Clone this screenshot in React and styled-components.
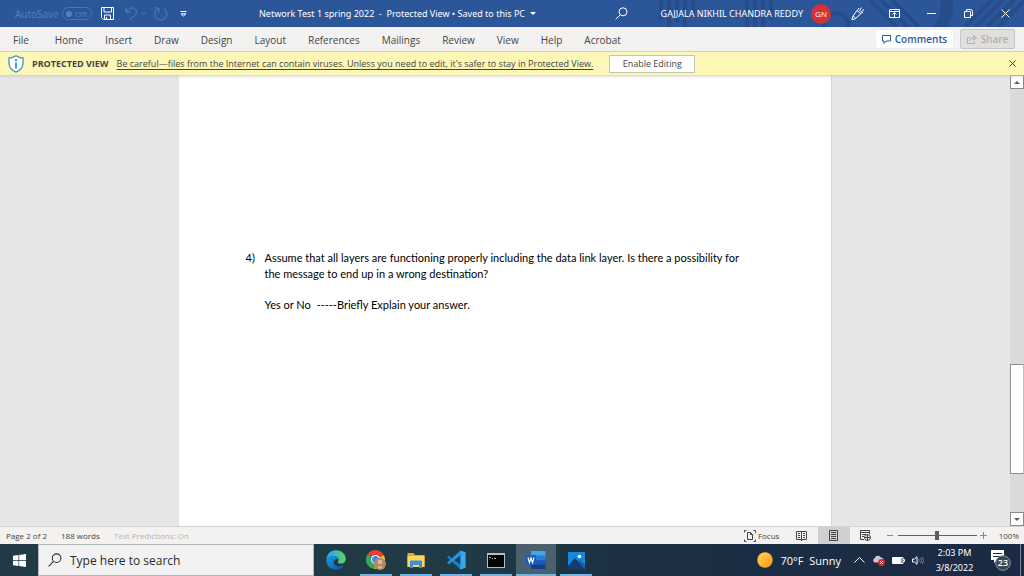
import styled, { createGlobalStyle } from 'styled-components'

const GlobalStyle = createGlobalStyle`
    *{
        box-sizing: border-box;
    }
    body{
        margin: 0;
        font-family: "Open Sans", "Noto Sans", sans-serif;
        font-size: 10px;
        color: #444444;
    }
    button, input{
        font: inherit;
        color: inherit;
        margin: 0;
        padding: 0;
        border: 0;
        background: none;
    }
    svg{
        display: block;
        flex: none;
    }
`
const Screen = styled.div`
    display: flex;
    flex-direction: column;
    height: 100vh;
    overflow: hidden;
`

/* title bar */
const TitleBar = styled.header`
    position: relative;
    z-index: 0;
    display: grid;
    grid-template-columns: 259fr 354fr 411fr;
    align-items: center;
    flex: none;
    height: 27px;
    background: #2b579a;
    color: #ffffff;
    white-space: nowrap;
`
const Pattern = styled.svg`
    position: absolute;
    top: 0;
    right: 0;
    z-index: -1;
`
const Group = styled.div`
    display: flex;
    align-items: center;
    padding-left: ${props => props.$indent || "0"};
`
const QuickAccess = styled(Group)`
    color: #5580bd;
`
const Toggle = styled.button`
    display: flex;
    align-items: center;
    justify-content: space-between;
    width: 30px;
    height: 13px;
    margin-left: 3px;
    padding: 0 4px 0 3px;
    border: 1px solid #4a76b5;
    border-radius: 7px;
    font-size: 8px;
    line-height: 10px;
`
const Knob = styled.span`
    width: 6px;
    height: 6px;
    border-radius: 50%;
    background: #5580bd;
`
const IconButton = styled.button`
    display: flex;
    align-items: center;
    justify-content: center;
    width: ${props => props.$width || "16px"};
    height: 18px;
    color: ${props => props.$color || "inherit"};
`
const DocumentName = styled.h1`
    margin: 0;
    font-family: "Noto Sans", "Open Sans", sans-serif;
    font-size: 9px;
    font-weight: normal;
    display: flex;
    align-items: center;
    gap: 5px;
`
const Account = styled.div`
    display: grid;
    grid-template-columns: 14px 1fr auto auto;
    align-items: center;
`
const UserName = styled.span`
    padding-right: 8px;
    font-family: "Noto Sans", "Open Sans", sans-serif;
    font-size: 9px;
    text-align: right;
`
const Avatar = styled.span`
    width: 20px;
    height: 20px;
    border-radius: 50%;
    background: #d13438;
    font-size: 8px;
    line-height: 20px;
    text-align: center;
`

/* ribbon */
const Ribbon = styled.nav`
    display: flex;
    align-items: center;
    flex: none;
    height: 25px;
    padding: 0 9px 0 2px;
    background: #f3f2f1;
    border-bottom: 1px solid #d2d0ce;
`
const Tab = styled.button`
    padding: 2px 11px 0;
    line-height: 22px;
    &:first-child{
        margin-right: 4px;
    }
`
const RibbonButton = styled.button`
    display: flex;
    align-items: center;
    justify-content: center;
    gap: 4px;
    width: ${props => props.$width};
    height: 20px;
    margin-left: ${props => props.disabled ? "6px" : "auto"};
    border: 1px solid ${props => props.disabled ? "#c8c6c4" : "#f0efee"};
    border-radius: 2px;
    background: ${props => props.disabled ? "#e1dfdd" : "#ffffff"};
    color: ${props => props.disabled ? "#b1afad" : "#2b579a"};
    font-weight: 600;
`

/* message bar */
const MessageBar = styled.div`
    position: relative;
    display: flex;
    align-items: center;
    flex: none;
    height: 23px;
    padding: 0 4px 0 8px;
    background: #fcf7b6;
    box-shadow: 0 1px 3px #c8c8c8;
    font-size: 9px;
    white-space: nowrap;
`
const MessageTitle = styled.strong`
    margin: 0 8px;
    font-weight: 700;
`
const MessageLink = styled.a`
    color: inherit;
    text-decoration: underline;
    text-underline-offset: 2px;
`
const EnableButton = styled.button`
    width: 86px;
    height: 18px;
    margin: 0 auto 0 16px;
    border: 1px solid #c6c4b4;
    background: #ffffff;
`

/* document */
const Workspace = styled.main`
    display: flex;
    flex: 1;
    min-height: 0;
    background: #e6e6e6;
`
const Canvas = styled.div`
    display: flex;
    justify-content: center;
    flex: 1;
`
const Page = styled.article`
    width: 653px;
    max-width: 100%;
    padding: 175px 88px 0 67px;
    background: #ffffff;
    border-right: 1px solid #d4d4d4;
    color: #000000;
    font-family: Lato, "Open Sans", sans-serif;
    font-size: 11px;
    line-height: 16px;
`
const Question = styled.div`
    display: grid;
    grid-template-columns: 19px 1fr;
`
const Paragraph = styled.p`
    margin: 0 0 15px;
    white-space: pre-wrap;
`
const Scrollbar = styled.div`
    display: flex;
    flex-direction: column;
    flex: none;
    width: 14px;
    background: #dadada;
`
const ScrollButton = styled.button`
    display: flex;
    align-items: center;
    justify-content: center;
    height: 14px;
    border: 1px solid #8a8a8a;
    background: #ffffff;
    color: #606060;
`
const Track = styled.div`
    display: grid;
    grid-template-rows: 274fr 110fr 38fr;
    flex: 1;
`
const Thumb = styled.div`
    grid-row: 2;
    border: 1px solid #8f8f8f;
    border-right-color: #c0c0c0;
    background: #ffffff;
`

/* status bar */
const StatusBar = styled.footer`
    display: flex;
    align-items: center;
    flex: none;
    height: 18px;
    padding: 0 5px 0 6px;
    background: #f3f2f1;
    border-top: 1px solid #d6d4d2;
    font-size: 8px;
    white-space: nowrap;
`
const Status = styled.span`
    margin-right: 14px;
    color: ${props => props.$muted ? "#b4b2b0" : "inherit"};
`
const StatusTools = styled.div`
    display: flex;
    align-items: center;
    margin-left: auto;
`
const ViewButton = styled.button`
    display: flex;
    align-items: center;
    justify-content: center;
    gap: 2px;
    width: ${props => props.$width || "32px"};
    height: 17px;
    background: ${props => props.$active ? "#d2d0ce" : "none"};
`
const Zoom = styled.input`
    appearance: none;
    width: 79px;
    height: 12px;
    background: linear-gradient(#605e5c, #605e5c) center / 100% 1px no-repeat;
    &::-webkit-slider-thumb{
        appearance: none;
        width: 4px;
        height: 9px;
        background: #605e5c;
    }
`
const Percent = styled.span`
    margin-left: 8px;
`

/* taskbar */
const Taskbar = styled.footer`
    display: flex;
    align-items: stretch;
    flex: none;
    height: 32px;
    background: linear-gradient(90deg, #213a45, #203b45 45%, #1c2f42 62%, #1b2a44);
    color: #ffffff;
    white-space: nowrap;
`
const StartButton = styled.button`
    display: flex;
    align-items: center;
    justify-content: center;
    width: 38px;
`
const Search = styled.label`
    display: flex;
    align-items: center;
    gap: 8px;
    width: 276px;
    margin-right: 2px;
    padding-left: 9px;
    border: 1px solid #b5b8b9;
    background: #f2f2f2;
    color: #2b2b2b;
`
const SearchInput = styled.input`
    flex: 1;
    min-width: 0;
    outline: none;
    font-size: 12px;
    &::placeholder{
        color: #2b2b2b;
        opacity: 1;
    }
`
const AppButton = styled.button`
    display: flex;
    align-items: center;
    justify-content: center;
    width: ${props => props.$open && !props.$active ? "32px" : "40px"};
    margin: 0 ${props => props.$open && !props.$active ? "4px" : "0"};
    background: ${props => props.$active ? "#4a606c" : "none"};
    box-shadow: ${props => props.$open ? "inset 0 -2px #72b4e4" : "none"};
`
const Tray = styled.div`
    display: flex;
    align-items: center;
    margin-left: auto;
    padding-right: 3px;
`
const Weather = styled.button`
    display: flex;
    align-items: center;
    gap: 8px;
    margin-right: 13px;
    font-size: 11px;
    white-space: pre;
`
const TrayIcons = styled.div`
    display: flex;
    align-items: center;
    gap: 7px;
`
const Clock = styled.time`
    width: 61px;
    font-family: "Noto Sans", "Open Sans", sans-serif;
    font-size: 9px;
    line-height: 15px;
    text-align: center;
`
const Notifications = styled.button`
    display: flex;
    align-items: center;
    height: 32px;
    margin-left: 5px;
    padding-right: 8px;
    border-right: 1px solid #7c8794;
`

const tabs = ['File', 'Home', 'Insert', 'Draw', 'Design', 'Layout', 'References', 'Mailings', 'Review', 'View', 'Help', 'Acrobat']

const line = { fill: 'none', stroke: 'currentColor' }

const Decoration = () => (
    <Pattern width="384" height="27" viewBox="640 0 384 27" fill="none" stroke="#264d8a" strokeWidth="4" aria-hidden="true">
        <path d="M661 0v20M669 0v27M677 0v23M685 0v27M693 0v16M747 0v27M755 0v27M763 0v27M771 0v20"/>
        <circle cx="836" cy="25" r="12"/>
        <path d="M944-6Q952 12 938 30" strokeWidth="12"/>
        <path d="M870 0l27 27M881 0l27 27M892 0l27 27M965 27l27-27M976 27l27-27M987 27l27-27M998 27l27-27"/>
    </Pattern>
)

const SearchIcon = ({ size = 13 }) => (
    <svg width={size} height={size} viewBox="0 0 13 13" {...line}>
        <circle cx="8" cy="4.8" r="4"/>
        <path d="M5.2 7.8L.6 12.4"/>
    </svg>
)

const Caret = ({ up }) => (
    <svg width="6" height="3" viewBox="0 0 6 3" fill="currentColor">
        <path d={up ? 'M0 3L3 0L6 3z' : 'M0 0L3 3L6 0z'}/>
    </svg>
)

const EdgeIcon = () => (
    <svg width="20" height="20" viewBox="0 0 20 20">
        <defs>
            <linearGradient id="edgeTop" x1="0" x2="1"><stop offset=".2" stopColor="#28a8e8"/><stop offset="1" stopColor="#62d957"/></linearGradient>
            <linearGradient id="edgeLow" x1="0" x2="1" y2="1"><stop stopColor="#1b9de2"/><stop offset="1" stopColor="#0c4fa5"/></linearGradient>
        </defs>
        <path d="M.5 9C1 3.500 5 .3 10 .3C16 .3 19.700 4.500 19.700 8.800C19.700 12 17.400 13.600 15 13.600C12.500 13.600 11.500 12.600 12 11.800C13.800 9.500 12 6.300 7.800 6.300C4 6.300 1.500 7.500 .5 9z" fill="url(#edgeTop)"/>
        <path d="M.4 10C.6 7 4 5.500 7.500 5.700C10.500 5.900 12.500 7.500 12.400 9.500C11 8 7.700 9.500 7.700 12.300C7.700 16 12.500 18 18 15C16 18.300 13 19.800 10 19.800C4 19.800 .2 15 .4 10z" fill="url(#edgeLow)"/>
    </svg>
)

const ChromeIcon = () => (
    <svg width="20" height="20" viewBox="0 0 20 20">
        <path d="M9.500 9.500L1.400 4.600A9.400 9.400 0 0 1 17.800 5.200z" fill="#e24235"/>
        <path d="M9.500 9.500L1.400 4.600A9.400 9.400 0 0 0 8.800 19z" fill="#35a853"/>
        <path d="M9.500 9.500L17.800 5.200A9.400 9.400 0 0 1 8.800 19z" fill="#fbc116"/>
        <circle cx="9.500" cy="9.500" r="4.500" fill="#ffffff"/>
        <circle cx="9.500" cy="9.500" r="3.500" fill="#4285f4"/>
        <circle cx="14" cy="14" r="6" fill="#b18a61"/>
        <circle cx="14" cy="12" r="2.300" fill="#dfb999"/>
        <path d="M11.500 18C12 15 16 15 16.500 18A6 6 0 0 1 11.500 18z" fill="#cdb792"/>
    </svg>
)

const ExplorerIcon = () => (
    <svg width="18" height="16" viewBox="0 0 18 16">
        <path d="M.5 1h6l1.500 2h9.500v12H.5z" fill="#e9a820"/>
        <path d="M.5 4h17v11H.5z" fill="#ffd45c"/>
        <path d="M3 9.500Q3 8.500 4 8.500h10q1 0 1 1V16h-3v-3H6v3H3z" fill="#3a8fd6"/>
    </svg>
)

const CodeIcon = () => (
    <svg width="20" height="20" viewBox="0 0 20 20">
        <path d="M14.500 .5L19.500 2.500V17.500L14.500 19.500L1 7.300L2.800 5.800L14.500 14.500z" fill="#1680c7"/>
        <path d="M14.500 .5V5.500L2.800 14.200L1 12.700z" fill="#2196de"/>
        <path d="M14.500 .5L19.500 2.500V17.500L14.500 19.500z" fill="#35a9ef"/>
    </svg>
)

const TerminalIcon = () => (
    <svg width="18" height="15" viewBox="0 0 18 15">
        <path d="M0 0h18v15H0z" fill="#b9bcbe"/>
        <path d="M1 2h16v12H1z" fill="#050505"/>
        <path d="M2 4.500h2M5 5.500h1M7 5.500h2" stroke="#aaaaaa"/>
    </svg>
)

const WordIcon = () => (
    <svg width="20" height="18" viewBox="0 0 20 18">
        <path d="M5 0h14.500v5H5z" fill="#41a5ee"/>
        <path d="M5 4.500h14.500V9H5z" fill="#2b7cd3"/>
        <path d="M5 9h14.500v4.500H5z" fill="#185abd"/>
        <path d="M5 13.500h14.500V18H5z" fill="#103f91"/>
        <rect y="4" width="10" height="10" rx="1" fill="#185abd"/>
        <path d="M2 6.500L3.500 11.500L5 7L6.500 11.500L8 6.500" fill="none" stroke="#ffffff" strokeWidth="1.200"/>
    </svg>
)

const PhotosIcon = () => (
    <svg width="17" height="17" viewBox="0 0 17 17">
        <path d="M0 0h17v17H0z" fill="#1687dd"/>
        <path d="M0 14L7 6L17 17H0z" fill="#163d70"/>
        <path d="M10 9.500L12 8L17 13V17z" fill="#205b9e"/>
        <circle cx="11.500" cy="4.500" r="1.800" fill="#ffffff"/>
    </svg>
)

const apps = [
    { name: 'Edge', Icon: EdgeIcon },
    { name: 'Chrome', Icon: ChromeIcon, open: true },
    { name: 'File Explorer', Icon: ExplorerIcon, open: true },
    { name: 'Visual Studio Code', Icon: CodeIcon, open: true },
    { name: 'Command Prompt', Icon: TerminalIcon, open: true },
    { name: 'Word', Icon: WordIcon, open: true, active: true },
    { name: 'Photos', Icon: PhotosIcon, open: true },
]

const Header = () => (
    <TitleBar>
        <Decoration/>
        <QuickAccess $indent="15px">
            <span>AutoSave</span>
            <Toggle aria-label="AutoSave"><Knob/>Off</Toggle>
            <IconButton $width="32px" $color="#ffffff" aria-label="Save">
                <svg width="13" height="13" viewBox="0 0 13 13" {...line}>
                    <path d="M.5 .5h12v12H2.500l-2-2zM3 .5v4.500h7.500V.5M3.500 12.500V8h6v4.500M5.500 10v2.500"/>
                </svg>
            </IconButton>
            <IconButton aria-label="Undo">
                <svg width="13" height="13" viewBox="0 0 13 13" {...line}>
                    <path d="M1 .5V5h4.500M1 5L4.500 2C8-.5 12 2 11.500 5.500C11 8 8 10 5 12.500"/>
                </svg>
            </IconButton>
            <IconButton $width="8px" aria-label="Undo options">
                <svg width="5" height="4" viewBox="0 0 5 4" {...line}><path d="M.5 .5l2 2l2-2"/></svg>
            </IconButton>
            <IconButton $width="26px" aria-label="Repeat">
                <svg width="14" height="14" viewBox="0 0 14 14" {...line}>
                    <path d="M.5 1H5v4.500M4.700 1.500A6 6 0 1 0 10 2"/>
                </svg>
            </IconButton>
            <IconButton $width="20px" $color="#ffffff" aria-label="Customize toolbar">
                <svg width="7" height="6" viewBox="0 0 7 6" {...line}><path d="M.5 .5h6M1 2.800h5L3.500 5z"/></svg>
            </IconButton>
        </QuickAccess>
        <DocumentName>
            <span>Network Test 1 spring 2022&nbsp; - &nbsp;Protected View • Saved to this PC</span>
            <Caret/>
        </DocumentName>
        <Account>
            <IconButton aria-label="Search"><SearchIcon/></IconButton>
            <UserName>GAJJALA NIKHIL CHANDRA REDDY</UserName>
            <Avatar>GN</Avatar>
            <Group $indent="9px">
                <IconButton $width="36px" aria-label="Draw">
                    <svg width="14" height="13" viewBox="0 0 14 13" {...line}>
                        <path d="M6 3.500l4 3L4 12L.8 12.500L2 9zM2 9l2.500 2M6 3.500L8 1.500M10 6.500l2-1.500M8.500 4l2-3.500M10 5l3-2.500M7.500 1v1"/>
                    </svg>
                </IconButton>
                <IconButton $width="36px" aria-label="Ribbon display options">
                    <svg width="11" height="9" viewBox="0 0 11 9" {...line}>
                        <path d="M.5 .5h10v8H.5zM.5 2.500h10M5.500 8V4M3.500 5.500l2-2l2 2"/>
                    </svg>
                </IconButton>
                <IconButton $width="38px" aria-label="Minimize">
                    <svg width="9" height="1" viewBox="0 0 9 1" fill="#ffffff"><path d="M0 0h9v1H0z"/></svg>
                </IconButton>
                <IconButton $width="36px" aria-label="Restore">
                    <svg width="9" height="9" viewBox="0 0 9 9" {...line}>
                        <path d="M.5 2.500h6v6h-6zM2.500 2.500v-2h4q2 0 2 2v4h-2"/>
                    </svg>
                </IconButton>
                <IconButton $width="38px" aria-label="Close">
                    <svg width="9" height="9" viewBox="0 0 9 9" {...line}><path d="M.5 .5l8 8M8.500 .5l-8 8"/></svg>
                </IconButton>
            </Group>
        </Account>
    </TitleBar>
)

const App = () => (
    <Screen>
        <GlobalStyle/>
        <Header/>
        <Ribbon>
            {tabs.map(tab => <Tab key={tab}>{tab}</Tab>)}
            <RibbonButton $width="79px">
                <svg width="9" height="9" viewBox="0 0 9 9" {...line}><path d="M.5 .5h8v5.500H4L2 8.500V6H.5z"/></svg>
                Comments
            </RibbonButton>
            <RibbonButton $width="55px" disabled>
                <svg width="10" height="9" viewBox="0 0 10 9" {...line}>
                    <path d="M3 2.500H.5v6h7V6M2.500 6Q3 3 6.500 3M6.500 .5V5L9.500 2.800z"/>
                </svg>
                Share
            </RibbonButton>
        </Ribbon>
        <MessageBar>
            <svg width="16" height="18" viewBox="0 0 16 18">
                <path d="M8 .8Q11 3 15 3V8Q15 14 8 17.200Q1 14 1 8V3Q5 3 8 .8z" fill="#ffffff" stroke="#3a96c8" strokeWidth="1.300"/>
                <path d="M8 4v2M8 7.500v6" stroke="#1f7fc0" strokeWidth="1.600"/>
            </svg>
            <MessageTitle>PROTECTED VIEW</MessageTitle>
            <MessageLink href="#protected-view">Be careful—files from the Internet can contain viruses. Unless you need to edit, it's safer to stay in Protected View.</MessageLink>
            <EnableButton>Enable Editing</EnableButton>
            <IconButton aria-label="Close message">
                <svg width="7" height="7" viewBox="0 0 7 7" {...line}><path d="M.5 .5l6 6M6.500 .5l-6 6"/></svg>
            </IconButton>
        </MessageBar>
        <Workspace>
            <Canvas>
                <Page>
                    <Question>
                        <span>4)</span>
                        <div>
                            <Paragraph>Assume that all layers are functioning properly including the data link layer. Is there a possibility for the message to end up in a wrong destination?</Paragraph>
                            <Paragraph>Yes or No  -----Briefly Explain your answer.</Paragraph>
                        </div>
                    </Question>
                </Page>
            </Canvas>
            <Scrollbar>
                <ScrollButton aria-label="Scroll up"><Caret up/></ScrollButton>
                <Track><Thumb/></Track>
                <ScrollButton aria-label="Scroll down"><Caret/></ScrollButton>
            </Scrollbar>
        </Workspace>
        <StatusBar>
            <Status>Page 2 of 2</Status>
            <Status>188 words</Status>
            <Status $muted>Text Predictions: On</Status>
            <StatusTools>
                <ViewButton $width="48px">
                    <svg width="12" height="12" viewBox="0 0 12 12" {...line}>
                        <path d="M2.500 .5h-2v2M.5 9.500v2h2M9.500 .5h2v2M11.500 9.500v2h-2M3.500 2.500h3l2 2v5h-5zM6.500 2.500v2h2"/>
                    </svg>
                    Focus
                </ViewButton>
                <ViewButton aria-label="Read mode">
                    <svg width="11" height="10" viewBox="0 0 11 10" {...line}>
                        <path d="M.5 .5h5v8h-5zM5.500 .5h5v8h-5zM5.500 8v2M2 2.500h2M2 4.500h2M2 6.500h2M7 2.500h2M7 4.500h2M7 6.500h2"/>
                    </svg>
                </ViewButton>
                <ViewButton $active aria-label="Print layout">
                    <svg width="9" height="11" viewBox="0 0 9 11" {...line}>
                        <path d="M.5 .5h8v10h-8zM2 2.500h5M2 4.500h5M2 6.500h5M2 8.500h5"/>
                    </svg>
                </ViewButton>
                <ViewButton aria-label="Web layout">
                    <svg width="11" height="11" viewBox="0 0 11 11" {...line}>
                        <path d="M4 9.500H.5v-9h9V4M.5 2.500h9M2 4.500h4M2 6.500h2"/>
                        <circle cx="7.500" cy="7.500" r="3"/>
                        <path d="M4.500 7.500h6M7.500 4.500v6"/>
                    </svg>
                </ViewButton>
                <IconButton aria-label="Zoom out">
                    <svg width="6" height="1" viewBox="0 0 6 1" fill="#8a8886"><path d="M0 0h6v1H0z"/></svg>
                </IconButton>
                <Zoom type="range" aria-label="Zoom" defaultValue="50"/>
                <IconButton $width="14px" aria-label="Zoom in">
                    <svg width="7" height="7" viewBox="0 0 7 7" fill="none" stroke="#8a8886"><path d="M0 3.500h7M3.500 0v7"/></svg>
                </IconButton>
                <Percent>100%</Percent>
            </StatusTools>
        </StatusBar>
        <Taskbar>
            <StartButton aria-label="Start">
                <svg width="13" height="13" viewBox="0 0 13 13" fill="#ffffff">
                    <path d="M0 1.800L5.500 1V6H0zM6.200 .9L13 0V6H6.200zM0 6.700H5.500V12L0 11.200zM6.200 6.700H13V13L6.200 12.100z"/>
                </svg>
            </StartButton>
            <Search>
                <SearchIcon size={14}/>
                <SearchInput type="text" placeholder="Type here to search" aria-label="Search"/>
            </Search>
            {apps.map(({ name, Icon, open, active }) => (
                <AppButton key={name} $open={open} $active={active} aria-label={name}><Icon/></AppButton>
            ))}
            <Tray>
                <Weather>
                    <svg width="16" height="16" viewBox="0 0 16 16">
                        <defs>
                            <linearGradient id="sun" x2="1" y2="1"><stop stopColor="#ffd34f"/><stop offset="1" stopColor="#ff9a1f"/></linearGradient>
                        </defs>
                        <circle cx="8" cy="8" r="7.700" fill="url(#sun)"/>
                    </svg>
                    70°F  Sunny
                </Weather>
                <TrayIcons>
                    <svg width="11" height="6" viewBox="0 0 11 6" {...line}><path d="M.5 5.500l5-5l5 5"/></svg>
                    <svg width="13" height="11" viewBox="0 0 13 11">
                        <path d="M2.500 7.500A2.500 2.500 0 0 1 2.800 3A3.500 3.500 0 0 1 9 2.500A3 3 0 0 1 11 7.500z" fill="#c7cbd0"/>
                        <circle cx="9.500" cy="7.500" r="3.400" fill="#d92b34"/>
                        <path d="M8.200 6.200l2.600 2.600M10.800 6.200L8.200 8.800" stroke="#ffffff"/>
                    </svg>
                    <svg width="13" height="7" viewBox="0 0 13 7">
                        <path d="M.5 .5h10.500v6H.5zM11 2.500h1.500v2H11" fill="none" stroke="#ffffff"/>
                        <path d="M1 1h8.500v5H1z" fill="#ffffff"/>
                    </svg>
                    <svg width="12" height="9" viewBox="0 0 12 9" {...line}>
                        <path d="M.5 3h2L5 .7v7.600L2.500 6h-2z"/>
                        <path d="M6.800 3q1 1.500 0 3M8.500 2q2 2.500 0 5M10.300 1q2.500 3.500 0 7" stroke="#77818f"/>
                    </svg>
                </TrayIcons>
                <Clock>2:03 PM<br/>3/8/2022</Clock>
                <Notifications aria-label="23 notifications">
                    <svg width="22" height="22" viewBox="0 0 22 22">
                        <path d="M1 1h13v10H7l-3 3v-3H1z" fill="#ffffff"/>
                        <path d="M3 4.500h9M3 7.500h9" stroke="#1b2a44"/>
                        <circle cx="13" cy="14" r="7.300" fill="#3c444f" stroke="#8d949e"/>
                        <text x="13" y="17" fontSize="9" fontWeight="600" fill="#ffffff" textAnchor="middle">23</text>
                    </svg>
                </Notifications>
            </Tray>
        </Taskbar>
    </Screen>
)

export default App
